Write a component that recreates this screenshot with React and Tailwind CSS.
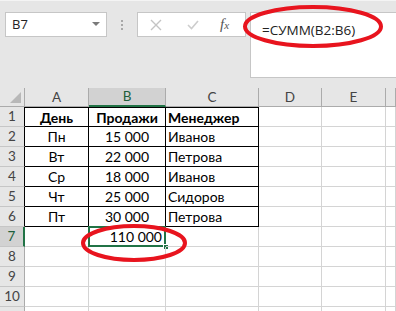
import { useState } from "react";

const cols = ["A", "B", "C", "D", "E", ""];

const data = [
  ["День", "Продажи", "Менеджер"],
  ["Пн", "15 000", "Иванов"],
  ["Вт", "22 000", "Петрова"],
  ["Ср", "18 000", "Иванов"],
  ["Чт", "25 000", "Сидоров"],
  ["Пт", "30 000", "Петрова"],
  ["", "110 000", ""],
  ["", "", ""],
  ["", "", ""],
  ["", "", ""],
  ["", "", ""],
];

function Cell({ row, col, text }) {
  const inTable = row < 6 && col < 3;
  const selected = row === 6 && col === 1;
  let align = "justify-center";
  if (col === 2) align = "justify-start pl-[2px]";
  if (selected) align = "justify-end pr-[3px]";

  return (
    <div
      className={
        "relative h-[20px] flex items-center text-[14px] text-black border-r border-b " +
        align +
        (inTable ? " border-black" : " border-[#d4d4d4]") +
        (inTable && row === 0 ? " border-t border-t-black font-bold" : "")
      }
    >
      <span className="leading-none pt-[1px] whitespace-nowrap">{text}</span>
      {selected && (
        <>
          <div className="absolute -left-[1px] -top-[1px] -right-[1px] -bottom-[1px] border-2 border-[#217346]" />
          <div className="absolute -right-[4px] -bottom-[4px] w-[6px] h-[6px] bg-[#217346] border border-white" />
        </>
      )}
    </div>
  );
}

function App() {
  const [active] = useState("B7");

  return (
    <div className="relative w-[396px] h-[311px] overflow-hidden bg-white font-['Lato',sans-serif]">
      {/* formula bar */}
      <div className="h-[88px] bg-[#e6e6e6] border-t border-[#f4f4f4] pt-[11px] pl-[5px] flex items-start">
        <div className="w-[102px] h-[25px] bg-white border border-[#c6c6c6] flex items-center justify-between pl-[6px] pr-[6px]">
          <span className="font-['Open_Sans',sans-serif] text-[13px] text-[#222]">{active}</span>
          <svg width="8" height="5" viewBox="0 0 8 5">
            <path d="M0 0 L8 0 L4 4 Z" fill="#7a7a7a" />
          </svg>
        </div>
        <div className="w-[30px] h-[25px] flex flex-col items-center justify-center gap-[2px]">
          <div className="w-[2px] h-[2px] bg-[#a8a8a8]" />
          <div className="w-[2px] h-[2px] bg-[#a8a8a8]" />
          <div className="w-[2px] h-[2px] bg-[#a8a8a8]" />
        </div>
        <div className="w-[109px] h-[25px] bg-white border border-[#c6c6c6] flex items-center pl-[12px]">
          <svg width="12" height="12" viewBox="0 0 12 12">
            <path d="M1 1 L11 11 M11 1 L1 11" stroke="#c4c4c4" strokeWidth="1.4" />
          </svg>
          <svg className="ml-[25px]" width="12" height="10" viewBox="0 0 12 10">
            <path d="M1 5 L4.5 8.5 L11 1" stroke="#cdcdcd" strokeWidth="1.6" fill="none" />
          </svg>
          <span className="ml-[21px] font-['Liberation_Serif',serif] italic text-[15px] text-[#555] leading-none">
            f<span className="text-[11px]">x</span>
          </span>
        </div>
        <div className="ml-[4px] flex-1 h-[66px] bg-white border border-r-0 border-[#c6c6c6] pl-[11px] pt-[4px]">
          <span className="font-['Open_Sans',sans-serif] text-[13.5px] text-[#222]">=СУММ(B2:B6)</span>
        </div>
      </div>

      {/* sheet grid */}
      <div className="grid grid-cols-[25px_64px_77px_93px_63px_64px_10px]">
        <div className="h-[19px] bg-[#e6e6e6] border-r border-b border-[#ababab] flex items-end justify-end pr-[3px] pb-[3px]">
          <svg width="11" height="11" viewBox="0 0 11 11">
            <path d="M11 0 L11 11 L0 11 Z" fill="#b8b8b8" />
          </svg>
        </div>
        {cols.map((c) => (
          <div
            key={c || "F"}
            className={
              "h-[19px] flex items-center justify-center text-[13.5px] border-r " +
              (c === "B"
                ? "bg-[#d2d2d2] text-[#1e5f3b] border-b-2 border-b-[#217346] border-r-[#ababab]"
                : "bg-[#e6e6e6] text-[#444] border-b border-[#ababab]")
            }
          >
            {c}
          </div>
        ))}

        {data.map((row, r) => (
          <div key={r} className="contents">
            <div
              className={
                "h-[20px] flex items-center justify-center text-[13.5px] border-b border-b-[#c6c6c6] " +
                (r === 6
                  ? "bg-[#d2d2d2] text-[#1e5f3b] border-r-2 border-r-[#217346]"
                  : r < 6
                  ? "bg-[#e6e6e6] text-[#444] border-r border-r-black"
                  : "bg-[#e6e6e6] text-[#444] border-r border-r-[#ababab]")
              }
            >
              {r < 10 ? r + 1 : ""}
            </div>
            {row.map((t, c) => (
              <Cell key={c} row={r} col={c} text={t} />
            ))}
            <Cell row={r} col={3} text="" />
            <Cell row={r} col={4} text="" />
            <Cell row={r} col={5} text="" />
          </div>
        ))}
      </div>

      {/* red marks */}
      <svg className="absolute left-0 top-0 pointer-events-none" width="396" height="311" viewBox="0 0 396 311">
        <ellipse cx="313" cy="26.5" rx="68" ry="19.5" fill="none" stroke="#e8141e" strokeWidth="4" />
        <ellipse cx="134" cy="243" rx="51" ry="17" fill="none" stroke="#e8141e" strokeWidth="4" />
      </svg>
    </div>
  );
}

export default App;
